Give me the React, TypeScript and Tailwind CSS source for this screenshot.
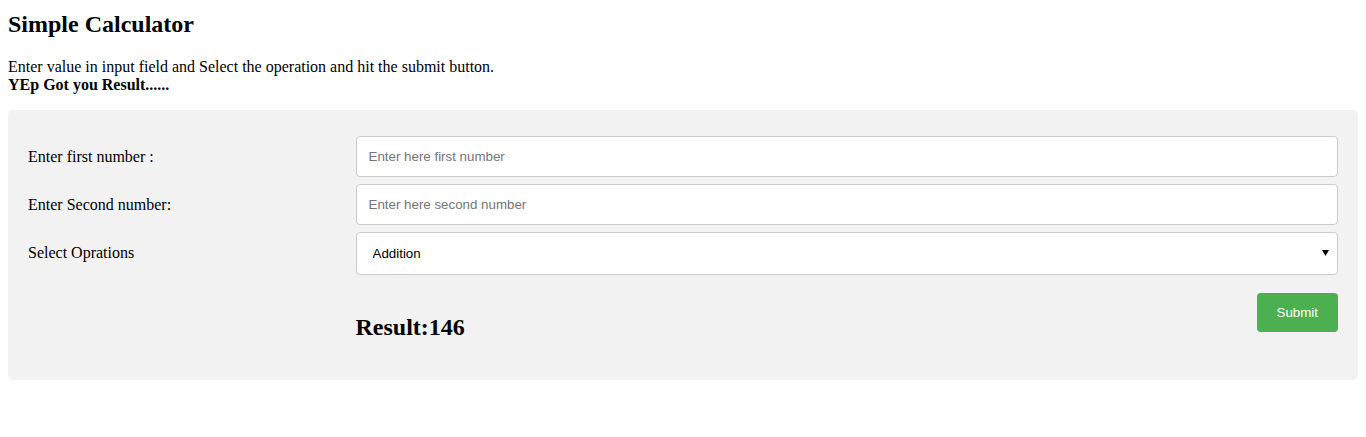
import { useState } from 'react'

const serif = "font-['Liberation_Serif','Times_New_Roman',serif]"
const sans = "font-['Liberation_Sans',Arial,sans-serif]"

export default function App() {
  const [first, setFirst] = useState('')
  const [second, setSecond] = useState('')
  const [op, setOp] = useState('add')

  return (
    <div className={`${serif} min-h-screen bg-white px-[8px] pt-[10px] text-black`}>
      <h2 className="mb-[20px] text-[24px] leading-[28px] font-bold">Simple Calculator</h2>
      <p className="mb-[16px] text-[16px] leading-[18px]">
        Enter value in input field and Select the operation and hit the submit button.
        <br />
        <b>YEp Got you Result......</b>
      </p>

      <div className="rounded-[5px] bg-[#f2f2f2] p-[20px]">
        {/* first number */}
        <div className="flex">
          <div className="w-1/4">
            <label className="block pt-[18px] pb-[12px] text-[16px] leading-[18px]">
              Enter first number :
            </label>
          </div>
          <div className="w-3/4 pt-[6px]">
            <input
              value={first}
              onChange={(e) => setFirst(e.target.value)}
              placeholder="Enter here first number"
              className={`${sans} block h-[41px] w-full rounded-[4px] border border-[#ccc] bg-white px-[12px] text-[13.33px] text-black placeholder:text-[#757575] outline-none`}
            />
          </div>
        </div>

        {/* second number */}
        <div className="flex">
          <div className="w-1/4">
            <label className="block pt-[18px] pb-[12px] text-[16px] leading-[18px]">
              Enter Second number:
            </label>
          </div>
          <div className="w-3/4 pt-[6px]">
            <input
              value={second}
              onChange={(e) => setSecond(e.target.value)}
              placeholder="Enter here second number"
              className={`${sans} block h-[41px] w-full rounded-[4px] border border-[#ccc] bg-white px-[12px] text-[13.33px] text-black placeholder:text-[#757575] outline-none`}
            />
          </div>
        </div>

        {/* operation */}
        <div className="flex">
          <div className="w-1/4">
            <label className="block pt-[18px] pb-[12px] text-[16px] leading-[18px]">
              Select Oprations
            </label>
          </div>
          <div className="relative w-3/4 pt-[6px]">
            <select
              value={op}
              onChange={(e) => setOp(e.target.value)}
              className={`${sans} block h-[43px] w-full appearance-none rounded-[4px] border border-[#ccc] bg-white pr-[24px] pl-[16px] text-[13.33px] text-black outline-none`}
            >
              <option value="add">Addition</option>
              <option value="sub">Subtraction</option>
              <option value="mul">Multiplication</option>
              <option value="div">Division</option>
            </select>
            <svg
              className="pointer-events-none absolute top-[24px] right-[9px]"
              width="7"
              height="6"
              viewBox="0 0 7 6"
            >
              <polygon points="0,0 7,0 3.5,6" fill="#000" />
            </svg>
          </div>
        </div>

        {/* result */}
        <div className="flex">
          <div className="w-1/4" />
          <div className="flex w-3/4 items-start justify-between">
            <h2 className="mt-[38px] mb-[19px] text-[24px] leading-[28px] font-bold">Result:146</h2>
            <button
              className={`${sans} mt-[18px] h-[39px] rounded-[4px] bg-[#4caf50] px-[20px] text-[13.33px] text-white`}
            >
              Submit
            </button>
          </div>
        </div>
      </div>
    </div>
  )
}
